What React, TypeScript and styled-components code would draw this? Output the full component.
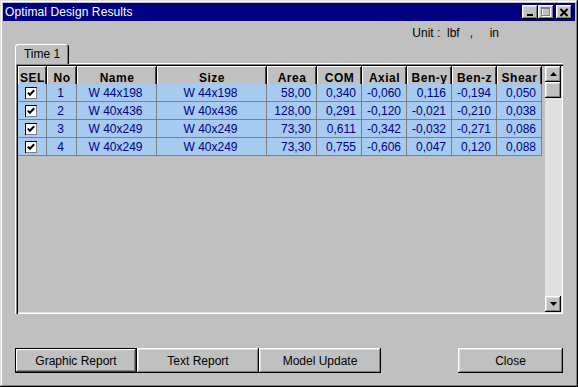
import { Fragment } from "react";
import styled, { createGlobalStyle } from "styled-components";

type Row = {
  no: number;
  name: string;
  size: string;
  area: string;
  com: string;
  axial: string;
  beny: string;
  benz: string;
  shear: string;
};

const rows: Row[] = [
  { no: 1, name: "W 44x198", size: "W 44x198", area: "58,00", com: "0,340", axial: "-0,060", beny: "0,116", benz: "-0,194", shear: "0,050" },
  { no: 2, name: "W 40x436", size: "W 40x436", area: "128,00", com: "0,291", axial: "-0,120", beny: "-0,021", benz: "-0,210", shear: "0,038" },
  { no: 3, name: "W 40x249", size: "W 40x249", area: "73,30", com: "0,611", axial: "-0,342", beny: "-0,032", benz: "-0,271", shear: "0,086" },
  { no: 4, name: "W 40x249", size: "W 40x249", area: "73,30", com: "0,755", axial: "-0,606", beny: "0,047", benz: "0,120", shear: "0,088" },
];

const headers = ["SEL", "No", "Name", "Size", "Area", "COM", "Axial", "Ben-y", "Ben-z", "Shear"];

const GlobalStyle = createGlobalStyle`
  html, body {
    margin: 0;
    padding: 0;
    background: #c0c0c0;
  }
  body {
    font-family: "Liberation Sans", Arial, sans-serif;
    font-size: 12px;
  }
`;

const raised = `
  box-shadow: inset -1px -1px #000, inset 1px 1px #fff, inset -2px -2px #808080, inset 2px 2px #dfdfdf;
`;

const Window = styled.div`
  width: 578px;
  height: 387px;
  box-sizing: border-box;
  padding: 3px;
  background: #c0c0c0;
  box-shadow: inset -1px -1px #000, inset 1px 1px #dfdfdf, inset -2px -2px #808080, inset 2px 2px #fff;
  display: flex;
  flex-direction: column;
`;

const TitleBar = styled.div`
  height: 18px;
  background: #000080;
  color: #fff;
  display: flex;
  align-items: center;
  padding: 0 3px 0 2px;
`;

const Title = styled.span`
  flex: 1;
  font-size: 12px;
  letter-spacing: 0.1px;
`;

const CtrlButton = styled.div<{ $gap?: boolean }>`
  width: 16px;
  height: 14px;
  background: #c0c0c0;
  margin-left: ${({ $gap }) => ($gap ? 2 : 0)}px;
  display: flex;
  align-items: center;
  justify-content: center;
  ${raised}
`;

const Body = styled.div`
  flex: 1;
  display: flex;
  flex-direction: column;
  padding: 0 12px;
`;

const UnitRow = styled.div`
  height: 23px;
  display: flex;
  align-items: center;
  justify-content: flex-end;
  padding-right: 64px;
  white-space: pre;
  color: #000;
`;

const TabStrip = styled.div`
  display: flex;
  height: 19px;
  position: relative;
  z-index: 1;
`;

const Tab = styled.div`
  width: 54px;
  height: 20px;
  box-sizing: border-box;
  background: #c0c0c0;
  border-radius: 3px 3px 0 0;
  box-shadow: inset 1px 1px #fff, inset -1px 0 #000, inset -2px 0 #808080;
  display: flex;
  align-items: center;
  justify-content: center;
  padding-bottom: 1px;
  color: #000;
`;

const Panel = styled.div`
  height: 251px;
  box-sizing: border-box;
  border-top: 1px solid #fff;
  border-left: 1px solid #fff;
`;

const GridFrame = styled.div`
  height: 250px;
  box-sizing: border-box;
  padding: 2px;
  display: flex;
  box-shadow: inset 1px 1px #808080, inset 2px 2px #000, inset -1px -1px #fff, inset -2px -2px #dfdfdf;
`;

const Table = styled.div`
  flex: 1;
  display: grid;
  grid-template-columns: 29px 30px 80px 110px 50px 45px 45px 45px 45px 45px;
  grid-auto-rows: 18px;
  align-content: start;
`;

const HeaderCell = styled.div`
  height: 24px;
  box-sizing: border-box;
  background: #c0c0c0;
  display: flex;
  align-items: center;
  justify-content: center;
  font-weight: bold;
  letter-spacing: 0.5px;
  color: #000;
  box-shadow: inset -1px -1px #000, inset 1px 1px #fff, inset -2px -2px #404040;
`;

const Cell = styled.div<{ $align?: "center" | "right" }>`
  box-sizing: border-box;
  background: #a6caf0;
  color: #000080;
  border-right: 1px solid #808080;
  border-bottom: 1px solid #808080;
  display: flex;
  align-items: center;
  justify-content: ${({ $align }) => ($align === "right" ? "flex-end" : "center")};
  padding: 0 5px 0 3px;
  white-space: pre;
`;

const CheckBox = styled.div`
  width: 12px;
  height: 12px;
  box-sizing: border-box;
  background: #fff;
  box-shadow: inset 1px 1px #000, inset -1px -1px #808080;
  display: flex;
  align-items: center;
  justify-content: center;
`;

const ScrollBar = styled.div`
  width: 16px;
  margin-left: 3px;
  display: flex;
  flex-direction: column;
  background: #e0e0e0;
`;

const ScrollButton = styled.div`
  width: 16px;
  height: 16px;
  box-sizing: border-box;
  background: #c0c0c0;
  display: flex;
  align-items: center;
  justify-content: center;
  ${raised}
`;

const Track = styled.div`
  flex: 1;
`;

const ButtonRow = styled.div`
  display: flex;
  margin-top: 34px;
`;

const PushButton = styled.div<{ $width: number; $default?: boolean; $push?: boolean }>`
  width: ${({ $width }) => $width}px;
  height: 25px;
  box-sizing: border-box;
  background: #c0c0c0;
  color: #000;
  display: flex;
  align-items: center;
  justify-content: center;
  margin-left: ${({ $push }) => ($push ? "auto" : "0")};
  ${({ $default }) =>
    $default
      ? `border: 1px solid #000;
         box-shadow: inset -1px -1px #404040, inset 1px 1px #fff, inset -2px -2px #808080;`
      : raised}
`;

const Check = () => (
  <svg width="8" height="8" viewBox="0 0 8 8">
    <path d="M0.8 3.6 L2.9 5.8 L7.2 1.2" fill="none" stroke="#000" strokeWidth="2" />
  </svg>
);

const App = () => {
  return (
    <>
      <GlobalStyle />
      <Window>
        <TitleBar>
          <Title>Optimal Design Results</Title>
          <CtrlButton>
            <svg width="10" height="9" viewBox="0 0 10 9">
              <rect x="2" y="6" width="6" height="2" fill="#000" />
            </svg>
          </CtrlButton>
          <CtrlButton>
            <svg width="10" height="10" viewBox="0 0 10 10">
              <rect x="1.5" y="1.5" width="8" height="8" fill="none" stroke="#fff" />
              <rect x="0.5" y="0.5" width="8" height="8" fill="none" stroke="#808080" />
              <rect x="1" y="1" width="8" height="1" fill="#808080" />
            </svg>
          </CtrlButton>
          <CtrlButton $gap>
            <svg width="10" height="9" viewBox="0 0 10 9">
              <path d="M1.5 1 L8.5 8 M8.5 1 L1.5 8" stroke="#000" strokeWidth="2" />
            </svg>
          </CtrlButton>
        </TitleBar>
        <Body>
          <UnitRow>{"Unit :  lbf   ,     in"}</UnitRow>
          <TabStrip>
            <Tab>Time 1</Tab>
          </TabStrip>
          <Panel>
            <GridFrame>
              <Table>
                {headers.map((h) => (
                  <HeaderCell key={h}>{h}</HeaderCell>
                ))}
                {rows.map((r) => (
                  <Fragment key={r.no}>
                    <Cell>
                      <CheckBox>
                        <Check />
                      </CheckBox>
                    </Cell>
                    <Cell>{r.no}</Cell>
                    <Cell>{r.name}</Cell>
                    <Cell>{r.size}</Cell>
                    <Cell $align="right">{r.area}</Cell>
                    <Cell $align="right">{r.com}</Cell>
                    <Cell $align="right">{r.axial}</Cell>
                    <Cell $align="right">{r.beny}</Cell>
                    <Cell $align="right">{r.benz}</Cell>
                    <Cell $align="right">{r.shear}</Cell>
                  </Fragment>
                ))}
              </Table>
              <ScrollBar>
                <ScrollButton>
                  <svg width="7" height="4" viewBox="0 0 7 4">
                    <path d="M3.5 0 L7 4 L0 4 Z" fill="#000" />
                  </svg>
                </ScrollButton>
                <ScrollButton />
                <Track />
                <ScrollButton>
                  <svg width="7" height="4" viewBox="0 0 7 4">
                    <path d="M0 0 L7 0 L3.5 4 Z" fill="#000" />
                  </svg>
                </ScrollButton>
              </ScrollBar>
            </GridFrame>
          </Panel>
          <ButtonRow>
            <PushButton $width={122} $default>
              Graphic Report
            </PushButton>
            <PushButton $width={122}>Text Report</PushButton>
            <PushButton $width={122}>Model Update</PushButton>
            <PushButton $width={105} $push>
              Close
            </PushButton>
          </ButtonRow>
        </Body>
      </Window>
    </>
  );
};

export default App;
